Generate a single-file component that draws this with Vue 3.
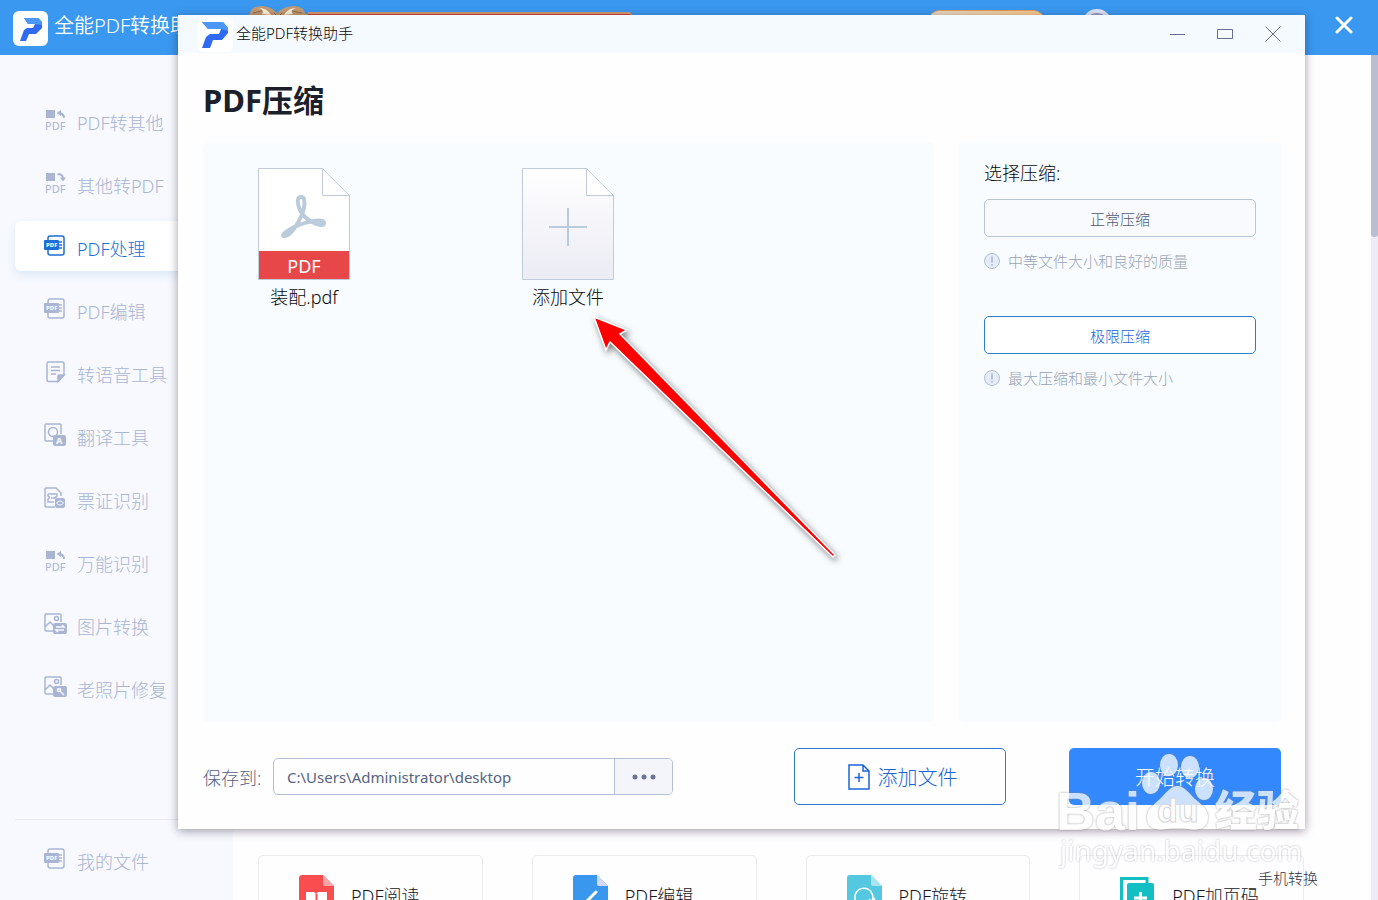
<template>
  <div class="page">
    <header class="topbar">
      <div class="brand">
        <svg class="logo" viewBox="0 0 35 35">
          <rect width="35" height="35" rx="6" fill="#fff" />
          <path d="M11 7H25L29 11V17L23 23H16L13 30H7L11 19L14 17H20L22 13H15Z" fill="#2f6bf2" />
          <path d="M11 7H25L29 11V14L22 13H15Z" fill="#4a97f5" />
        </svg>
        <span>全能PDF转换助手</span>
      </div>
      <div class="promo">
        <svg class="bow" viewBox="0 0 60 20">
          <path d="M2 7Q4 0 14 0Q24 1 29 7Q36 0 46 0Q56 1 57 7L60 9L50 12H10L0 10Z" fill="#c39a70" />
          <path d="M11 2Q19 2 23 9L14 8Q17 4 11 2ZM48 2Q40 2 36 9L45 8Q41 4 48 2Z" fill="#fff1dc" />
          <path d="M5 7L14 5M44 5L54 7M26 7L30 11L34 7" fill="none" stroke="#8a6a50" stroke-width="1" />
        </svg>
        <div class="ribbon"></div>
      </div>
      <div class="vip"></div>
      <div class="avatar"></div>
      <button class="close-main" aria-label="关闭">
        <svg viewBox="0 0 18 18"><path d="M2 2L16 16M16 2L2 16" fill="none" stroke="#fff" stroke-width="3" stroke-linecap="round" /></svg>
      </button>
    </header>

    <div class="body">
      <aside class="sidebar">
        <nav class="menu">
          <button v-for="m in menus" :key="m.label" class="menu-item" :class="{ active: m.label === current }" @click="current = m.label">
            <svg class="menu-icon" viewBox="0 0 24 24" fill="none" stroke="currentColor" stroke-width="1.5">
              <g v-if="m.icon === 'out' || m.icon === 'in'">
                <rect x="2" y="2" width="9" height="8" fill="currentColor" stroke="none" />
                <path v-if="m.icon === 'out'" d="M20 10Q20 5.500 15 5" stroke-width="2" />
                <path v-if="m.icon === 'out'" d="M17 2V8L12.500 5Z" fill="currentColor" stroke="none" />
                <path v-if="m.icon === 'in'" d="M13.500 3Q18.500 3 19 7" stroke-width="2" />
                <path v-if="m.icon === 'in'" d="M16 6.500H22L19 10.500Z" fill="currentColor" stroke="none" />
                <text x="1" y="22" class="icon-text">PDF</text>
              </g>
              <g v-else-if="m.icon === 'pdf'">
                <rect x="4" y="2" width="16" height="19" rx="2" />
                <rect x="0" y="6" width="15" height="10" rx="1" fill="currentColor" stroke="none" />
                <path d="M15 8H18M15 11H18M15 14H18" />
                <text x="2" y="13" class="icon-badge">PDF</text>
              </g>
              <g v-else-if="m.icon === 'note'">
                <path d="M3 3.500Q3 2 4.500 2H18.500Q20 2 20 3.500V15L14 21.500H4.500Q3 21.500 3 20Z" />
                <path d="M7 7H16M7 10.500H16M7 14H12" />
                <path d="M20 15H15Q14 15 14 16V21.500Z" fill="currentColor" />
              </g>
              <g v-else-if="m.icon === 'translate'">
                <path d="M10 18H2Q1 18 1 17V2Q1 1 2 1H16Q17 1 17 2V11" />
                <circle cx="9" cy="9" r="4.500" />
                <rect x="9" y="12" width="13" height="11" rx="2" fill="currentColor" stroke="none" />
                <text x="12" y="21" class="icon-a">A</text>
              </g>
              <g v-else-if="m.icon === 'ticket'">
                <path d="M11 21H2Q1 21 1 20V3Q1 2 2 2H12L17 7V10" />
                <path d="M4 8H13V10Q11 11 12 13M4 8V10Q7 11 4 13V16H10M7 12H11" />
                <rect x="11" y="12" width="10" height="10" rx="2" fill="currentColor" stroke="none" />
                <path d="M12.500 17Q16 13 19.500 17Q16 21 12.500 17Z" stroke="#f7f9fe" stroke-width="1" />
              </g>
              <g v-else>
                <path d="M9 19H2Q1 19 1 18V3Q1 2 2 2H16Q17 2 17 3V10M1 15L6 10L10 14" />
                <circle cx="12.500" cy="6.500" r="2" />
                <rect x="9" y="11" width="14" height="11" rx="2" fill="currentColor" stroke="none" />
                <path v-if="m.icon === 'swap'" d="M12 15H20L18 13M20 18H12L14 20" stroke="#f7f9fe" />
                <g v-else stroke="#f7f9fe">
                  <circle cx="15" cy="15" r="1.500" /><path d="M16 16L20 20" />
                </g>
              </g>
            </svg>
            <span>{{ m.label }}</span>
          </button>
        </nav>
        <div class="sidebar-foot">
          <button class="menu-item">
            <svg class="menu-icon" viewBox="0 0 24 24" fill="none" stroke="currentColor" stroke-width="1.5">
              <rect x="4" y="2" width="16" height="19" rx="2" />
              <rect x="0" y="6" width="15" height="10" rx="1" fill="currentColor" stroke="none" />
              <path d="M15 8H18M15 11H18M15 14H18" />
              <text x="2" y="13" class="icon-badge">PDF</text>
            </svg>
            <span>我的文件</span>
          </button>
        </div>
      </aside>

      <main class="content">
        <div class="cards">
          <button v-for="c in cards" :key="c.label" class="tool-card">
            <svg class="tool-icon" viewBox="0 0 35 42">
              <g v-if="c.icon === 'page'">
                <path d="M1.500 40V4.500H27V10" fill="none" stroke="#14bfc4" stroke-width="3" />
                <rect x="7" y="9" width="27" height="33" rx="2" fill="#14bfc4" />
                <path d="M20.500 18V30M14 24H27" stroke="#fff" stroke-width="3" />
              </g>
              <g v-else>
                <path d="M0 4Q0 1 3 1H24L35 12V38Q35 42 31 42H4Q0 42 0 38Z" :fill="c.color" />
                <path d="M24 1L35 12H26Q24 12 24 10Z" :fill="c.fold" />
                <path v-if="c.icon === 'read'" d="M7 18H15L17 20L19 18H28V32H19L17 34L15 32H7Z" fill="#fff" />
                <path v-if="c.icon === 'read'" d="M17.500 20V34" :stroke="c.color" stroke-width="2" />
                <path v-if="c.icon === 'edit'" d="M23 18L12 29" stroke="#fff" stroke-width="3" stroke-linecap="round" />
                <path v-if="c.icon === 'rotate'" d="M11 30A9 9 0 1 1 25 27M22 25L25 28L28 24" fill="none" stroke="#fff" stroke-width="1.5" />
              </g>
            </svg>
            <span>{{ c.label }}</span>
          </button>
        </div>
      </main>
      <div class="scroll"><div class="scroll-thumb"></div></div>
    </div>

    <section class="dialog" role="dialog" aria-label="PDF压缩">
      <div class="titlebar">
        <svg class="logo" viewBox="0 0 35 35">
          <rect width="35" height="35" rx="6" fill="#fff" />
          <path d="M4 5H25L30 11V16L24 23H15L12 31H4L8 20L12 17H21L23 12H10Z" fill="#2f6bf2" />
          <path d="M4 5H25L30 11V14L23 12H10Z" fill="#4a97f5" />
        </svg>
        <span class="titlebar-text">全能PDF转换助手</span>
        <div class="win-buttons">
          <button aria-label="最小化"><svg viewBox="0 0 16 16"><path d="M1 8.500H16" /></svg></button>
          <button aria-label="最大化"><svg viewBox="0 0 16 16"><path d="M.5 3.500H15.500V12.500H.5Z" /></svg></button>
          <button aria-label="关闭"><svg viewBox="0 0 16 16"><path d="M.5 .5L15.500 15.500M15.500 .5L.5 15.500" /></svg></button>
        </div>
      </div>

      <h1>PDF压缩</h1>

      <div class="panels">
        <div class="files">
          <div v-for="f in files" :key="f" class="file">
            <svg class="file-icon" viewBox="0 0 92 112">
              <path d="M.5 .5H64.500L91.500 27.500V111.500H.5Z" fill="#fff" stroke="#bfcbdb" />
              <path d="M64.500 .5V27.500H91.500" fill="none" stroke="#bfcbdb" />
              <rect x="1" y="83" width="90" height="28" fill="#e84749" />
              <path d="M43 29C37 29 40 42 47 49C53 55 66 60 66 55C66 50 49 53 36 59C28 63 23 68 26 68C34 69 49 43 46 31Q45 29 43 29Z" fill="none" stroke="#bacbdc" stroke-width="4" stroke-linejoin="round" />
              <text x="46" y="105" class="file-tag">PDF</text>
            </svg>
            <span>{{ f }}</span>
          </div>
          <button class="file">
            <svg class="file-icon" viewBox="0 0 92 112">
              <defs>
                <linearGradient id="paper" x1="0" y1="0" x2="0" y2="1">
                  <stop offset="0" stop-color="#fff" />
                  <stop offset="1" stop-color="#ebecf4" />
                </linearGradient>
              </defs>
              <path d="M.5 .5H64.500L91.500 27.500V111.500H.5Z" fill="url(#paper)" stroke="#bfcbdb" />
              <path d="M64.500 .5V27.500H91.500Z" fill="#fff" stroke="#bfcbdb" />
              <path d="M46 40V78M27 59H65" stroke="#bacbdc" stroke-width="2" />
            </svg>
            <span>添加文件</span>
          </button>
          <svg class="pointer" viewBox="0 0 260 260">
            <path d="M4 4L37 17L30 21L245 242L243 244L20 29L16 37Z" fill="#fe0000" stroke="#fff" stroke-width="1.5" />
          </svg>
        </div>

        <div class="options">
          <h2>选择压缩:</h2>
          <div v-for="o in levels" :key="o.label" class="option">
            <button class="level" :class="{ chosen: o.label === level }" @click="level = o.label">{{ o.label }}</button>
            <p class="hint">
              <svg viewBox="0 0 16 16">
                <circle cx="8" cy="8" r="7.500" fill="#e6ecf7" stroke="#b4bfd0" />
                <path d="M8 3.500V9.500M8 11V12.500" stroke="#a9b5ca" stroke-width="1.5" />
              </svg>
              <span>{{ o.hint }}</span>
            </p>
          </div>
        </div>
      </div>

      <div class="footer">
        <label for="path">保存到:</label>
        <div class="path-box">
          <input id="path" v-model="path" type="text" />
          <button class="browse" aria-label="浏览">
            <svg viewBox="0 0 24 6"><circle cx="3" cy="3" r="2.500" /><circle cx="12" cy="3" r="2.500" /><circle cx="21" cy="3" r="2.500" /></svg>
          </button>
        </div>
        <div class="actions">
          <button class="add">
            <svg viewBox="0 0 22 26" fill="none" stroke="currentColor" stroke-width="1.5">
              <path d="M1 1H15L21 7V25H1ZM15 1V7H21M11 9V18M6.500 13.500H15.500" />
            </svg>
            <span>添加文件</span>
          </button>
          <button class="start">开始转换</button>
        </div>
      </div>
    </section>

    <a class="phone" href="#">手机转换</a>

    <svg class="watermark" viewBox="0 0 250 120">
      <g class="mark">
        <ellipse cx="111" cy="13" rx="9" ry="11" />
        <ellipse cx="132" cy="15" rx="9" ry="11" />
        <ellipse cx="93" cy="31" rx="9" ry="11" />
        <ellipse cx="146" cy="37" rx="9" ry="11" />
        <path d="M119 34C126 34 130 40 137 47C146 54 150 59 150 65C150 77 140 79 130 77Q119 75 109 77C99 79 89 77 89 65C89 58 94 54 102 47C109 40 113 34 119 34Z" />
        <text x="-2" y="78" class="mark-latin">Bai</text>
        <text x="157" y="74" class="mark-cjk">经验</text>
      </g>
      <text x="2" y="109" class="mark mark-url">jingyan.baidu.com</text>
      <text x="99" y="70" class="mark-du">du</text>
    </svg>
  </div>
</template>

<script setup>
import { ref } from 'vue'

const current = ref('PDF处理')
const level = ref('极限压缩')
const path = ref('C:\\Users\\Administrator\\desktop')
const files = ref(['装配.pdf'])

const menus = [
  { label: 'PDF转其他', icon: 'out' },
  { label: '其他转PDF', icon: 'in' },
  { label: 'PDF处理', icon: 'pdf' },
  { label: 'PDF编辑', icon: 'pdf' },
  { label: '转语音工具', icon: 'note' },
  { label: '翻译工具', icon: 'translate' },
  { label: '票证识别', icon: 'ticket' },
  { label: '万能识别', icon: 'out' },
  { label: '图片转换', icon: 'swap' },
  { label: '老照片修复', icon: 'repair' }
]

const cards = [
  { label: 'PDF阅读', icon: 'read', color: '#fa4d50', fold: '#fba5a7' },
  { label: 'PDF编辑', icon: 'edit', color: '#3a97ee', fold: '#d5d9f5' },
  { label: 'PDF旋转', icon: 'rotate', color: '#54c8e0', fold: '#a9e4ef' },
  { label: 'PDF加页码', icon: 'page' }
]

const levels = [
  { label: '正常压缩', hint: '中等文件大小和良好的质量' },
  { label: '极限压缩', hint: '最大压缩和最小文件大小' }
]
</script>

<style>
body {
  margin: 0;
}
</style>

<style scoped>
.page {
  position: relative;
  display: flex;
  flex-direction: column;
  height: 100vh;
  overflow: hidden;
  background: #fefdff;
  font-family: "Noto Sans", "Noto Sans CJK SC", sans-serif;
  font-size: 18px;
  font-weight: 300;
}

button,
input {
  font: inherit;
  color: inherit;
  padding: 0;
  border: 0;
  background: none;
  box-sizing: border-box;
}

svg {
  display: block;
  flex: none;
}

/* 顶栏 */
.topbar {
  display: flex;
  flex: none;
  align-items: flex-start;
  height: 55px;
  padding: 0 25px 0 13px;
  box-sizing: border-box;
  background: #3a98f0;
  color: #fff;
}

.brand {
  display: flex;
  align-items: center;
  gap: 6px;
  width: 235px;
  height: 56px;
  font-size: 20px;
  font-weight: 350;
  line-height: 28px;
  white-space: nowrap;
}

.brand span {
  padding-bottom: 4px;
}

.logo {
  width: 35px;
  height: 35px;
}

.promo {
  display: flex;
  align-items: flex-start;
  width: 384px;
  padding-top: 6px;
}

.bow {
  width: 60px;
  height: 20px;
}

.ribbon {
  flex: 1;
  height: 30px;
  margin-top: 6px;
  border-top: 2px solid #d99a6c;
  border-radius: 0 4px 0 0;
  background: #c9463c;
}

.vip {
  width: 117px;
  height: 34px;
  margin: 10px 37px 0 auto;
  border-top: 1px solid #dd9a55;
  border-radius: 12px;
  box-sizing: border-box;
  background: linear-gradient(90deg, #e8d9c4, #f8c98d);
}

.avatar {
  width: 30px;
  height: 30px;
  margin: 9px 223px 0 0;
  border: 4px solid #dbe3f8;
  border-radius: 50%;
  box-sizing: border-box;
  background: #8f9cc0;
}

.close-main {
  margin-top: 16px;
}

.close-main svg {
  width: 18px;
  height: 18px;
}

.body {
  display: flex;
  flex: 1;
  min-height: 0;
}

/* 左侧菜单 */
.sidebar {
  display: flex;
  flex-direction: column;
  justify-content: space-between;
  width: 233px;
  padding: 40px 15px 0;
  box-sizing: border-box;
  background: #f7f9fe;
}

.menu {
  display: flex;
  flex-direction: column;
  gap: 13px;
}

.menu-item {
  display: flex;
  align-items: center;
  gap: 9px;
  width: 100%;
  height: 50px;
  padding-left: 29px;
  border-radius: 6px;
  color: #a9b5d3;
  text-align: left;
}

.menu-item span {
  padding-top: 4px;
}

.menu-item.active {
  background: #fff;
  color: #1d6fd8;
  box-shadow: 0 4px 10px #dde7f7;
}

.menu-icon {
  width: 24px;
  height: 24px;
}

.icon-text,
.icon-badge,
.icon-a {
  fill: currentColor;
  stroke: none;
  font-size: 11px;
  font-weight: 400;
}

.icon-badge {
  fill: #f7f9fe;
  font-size: 6px;
  font-weight: 800;
}

.icon-a {
  fill: #f7f9fe;
  font-size: 9px;
  font-weight: 800;
}

.sidebar-foot {
  padding: 14px 0 16px;
  border-top: 1px solid #e9ecf3;
}

/* 底部工具卡片 */
.content {
  display: flex;
  flex: 1;
  flex-direction: column;
  justify-content: flex-end;
  padding: 0 67px 0 25px;
}

.cards {
  display: grid;
  grid-template-columns: repeat(4, 1fr);
  gap: 49px;
  height: 45px;
}

.tool-card {
  display: flex;
  align-items: center;
  gap: 17px;
  height: 80px;
  padding-left: 40px;
  border: 1px solid #ebebf0;
  border-radius: 5px;
  color: #15171d;
}

.tool-icon {
  width: 35px;
  height: 42px;
}

.scroll {
  width: 7px;
  background: #ecebf6;
}

.scroll-thumb {
  height: 182px;
  border-radius: 0 0 3px 3px;
  background: #bbbed1;
}

/* 弹窗 */
.dialog {
  position: absolute;
  top: 15px;
  right: 73px;
  bottom: 71px;
  left: 178px;
  display: flex;
  flex-direction: column;
  background: #fefefe;
  box-shadow: 0 2px 9px rgba(30, 20, 40, 0.42);
}

.titlebar {
  display: flex;
  align-items: center;
  height: 38px;
  padding: 0 24px 0 20px;
  background: #f4faff;
  font-size: 15px;
  color: #08090c;
}

.titlebar-text {
  flex: 1;
  padding: 0 0 3px 3px;
}

.win-buttons {
  display: flex;
  gap: 32px;
}

.win-buttons svg {
  width: 16px;
  height: 16px;
  fill: none;
  stroke: #6a6e91;
}

h1 {
  margin: 0;
  padding: 25px 25px 21px;
  font-size: 31px;
  font-weight: 700;
  line-height: 44px;
  color: #1b202b;
}

.panels {
  display: flex;
  flex: 1;
  gap: 25px;
  min-height: 0;
  padding: 0 24px 0 25px;
}

.files,
.options {
  border-radius: 5px;
  background: #f8fcff;
}

.files {
  position: relative;
  display: flex;
  flex: 1;
  align-items: flex-start;
  gap: 62px;
  padding-top: 25px;
  color: #08090c;
}

.file {
  display: flex;
  flex-direction: column;
  align-items: center;
  gap: 4px;
  width: 202px;
  line-height: 26px;
}

.file-icon {
  width: 92px;
  height: 112px;
}

.file-tag {
  fill: #fff;
  font-size: 18px;
  font-weight: 400;
  text-anchor: middle;
}

/* 指向添加按钮的箭头 */
.pointer {
  position: absolute;
  top: 170px;
  left: 387px;
  width: 260px;
  height: 260px;
  filter: drop-shadow(2px 3px 3px rgba(0, 0, 0, 0.5));
  pointer-events: none;
}

.options {
  width: 322px;
  padding: 17px 25px;
  box-sizing: border-box;
}

h2 {
  margin: 0 0 13px;
  font-size: 18px;
  font-weight: 300;
  line-height: 26px;
  color: #08090c;
}

.option {
  margin-bottom: 43px;
}

.level {
  width: 100%;
  height: 38px;
  border: 1px solid #b9c4d6;
  border-radius: 5px;
  background: #f9fafd;
  font-size: 15px;
  color: #4f5a78;
}

.level.chosen {
  border-color: #2d7cc9;
  background: #fff;
  color: #1a66d8;
}

.hint {
  display: flex;
  align-items: center;
  gap: 8px;
  margin: 12px 0 0;
  font-size: 15px;
  line-height: 24px;
  color: #98a4b6;
}

.hint svg {
  width: 16px;
  height: 16px;
}

.footer {
  display: flex;
  align-items: center;
  padding: 26px 24px 24px 25px;
  color: #56637f;
}

.footer label {
  width: 70px;
}

.path-box {
  display: flex;
  width: 400px;
  height: 37px;
  border: 1px solid #b5bfd4;
  border-radius: 5px;
  box-sizing: border-box;
  overflow: hidden;
}

.path-box input {
  flex: 1;
  min-width: 0;
  padding: 0 13px;
  font-size: 15px;
  font-weight: 400;
  outline: none;
}

.browse {
  display: flex;
  align-items: center;
  justify-content: center;
  width: 58px;
  border-left: 1px solid #b5bfd4;
  background: #f4f5fa;
}

.browse svg {
  width: 24px;
  height: 6px;
  fill: #6b7498;
}

.actions {
  display: flex;
  gap: 63px;
  margin-left: auto;
}

.add,
.start {
  display: flex;
  align-items: center;
  justify-content: center;
  gap: 8px;
  width: 212px;
  height: 57px;
  border-radius: 5px;
  font-size: 20px;
}

.add {
  padding-left: 5px;
  border: 1px solid #2d79cf;
  color: #1a66d8;
}

.add svg {
  width: 22px;
  height: 26px;
}

.start {
  background: #3388fd;
  color: #fff;
}

.phone {
  position: absolute;
  right: 60px;
  bottom: 10px;
  font-size: 15px;
  line-height: 24px;
  color: #2f3442;
  text-decoration: none;
}

.watermark {
  position: absolute;
  right: 70px;
  bottom: 28px;
  width: 250px;
  height: 120px;
  pointer-events: none;
}

.mark {
  fill: #fff;
  opacity: 0.75;
  filter: drop-shadow(0 0 1px #888);
}

.mark-latin,
.mark-du {
  font-family: "Liberation Sans", sans-serif;
  font-size: 54px;
  font-weight: 700;
}

.mark-du {
  fill: #fff;
  stroke: #d5d6da;
  font-size: 34px;
}

.mark-cjk {
  font-size: 42px;
  font-weight: 900;
}

.mark-url {
  opacity: 0.55;
  font-size: 28px;
  font-weight: 400;
}
</style>
